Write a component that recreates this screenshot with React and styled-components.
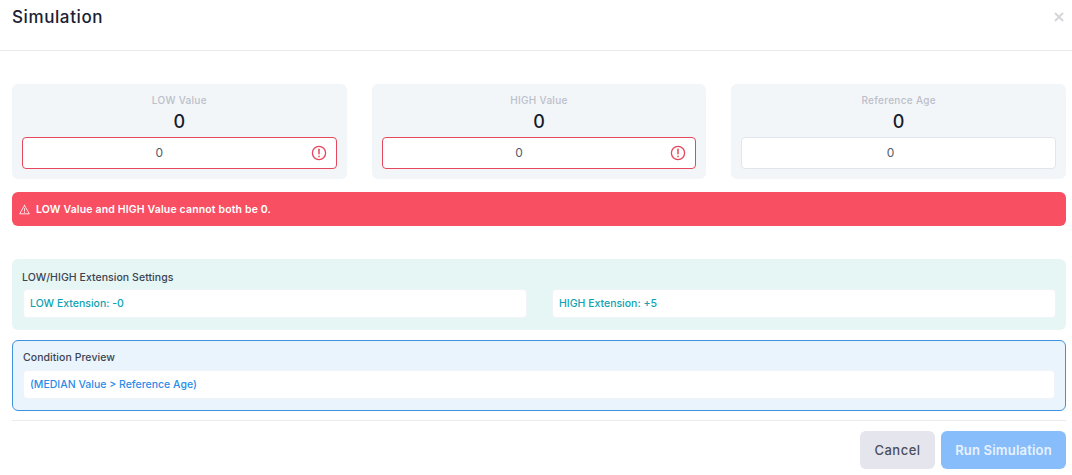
import React from 'react'
import styled, { createGlobalStyle } from 'styled-components'

const GlobalStyle = createGlobalStyle`
  html, body { margin: 0; padding: 0; background: #fff; }
  body { font-family: Inter, "Open Sans", sans-serif; color: #161c2d; }
  * { box-sizing: border-box; }
`

const App = () => {
  return (
    <>
      <GlobalStyle />
      <Modal>
        <Header>
          <Title>Simulation</Title>
          <Close aria-label="Close">
            <svg width="10" height="10" viewBox="0 0 10 10" fill="none" stroke="#d5d6da" strokeWidth="2">
              <path d="M1 1l8 8M9 1l-8 8" />
            </svg>
          </Close>
        </Header>
        <Body>
          <Cards>
            <ValueCard label="LOW Value" invalid />
            <ValueCard label="HIGH Value" invalid />
            <ValueCard label="Reference Age" />
          </Cards>
          <Alert>
            <svg width="11" height="11" viewBox="0 0 24 24" fill="none" stroke="#fff" strokeWidth="1.8" strokeLinejoin="round" strokeLinecap="round">
              <path d="M12 3L1.5 21.5h21L12 3z" />
              <path d="M12 10v5.5M12 18.2v.3" />
            </svg>
            LOW Value and HIGH Value cannot both be 0.
          </Alert>
          <ExtensionPanel>
            <PanelTitle>LOW/HIGH Extension Settings</PanelTitle>
            <ExtensionRow>
              <Readout $color="#0fa3b1">LOW Extension: -0</Readout>
              <Readout $color="#0fa3b1">HIGH Extension: +5</Readout>
            </ExtensionRow>
          </ExtensionPanel>
          <PreviewPanel>
            <PanelTitle>Condition Preview</PanelTitle>
            <Readout $color="#2b8be8">(MEDIAN Value &gt; Reference Age)</Readout>
          </PreviewPanel>
        </Body>
        <Footer>
          <CancelButton>Cancel</CancelButton>
          <RunButton>Run Simulation</RunButton>
        </Footer>
      </Modal>
    </>
  )
}

const ValueCard = ({ label, invalid }) => (
  <Card>
    <CardLabel>{label}</CardLabel>
    <CardValue>0</CardValue>
    <InputWrap>
      <ValueInput readOnly value="0" $invalid={invalid} />
      {invalid && (
        <InvalidIcon width="16" height="16" viewBox="0 0 16 16" fill="none" stroke="#e5485d" strokeWidth="1.3">
          <circle cx="8" cy="8" r="6.6" />
          <path d="M8 4.2v4.6" strokeWidth="1.5" strokeLinecap="round" />
          <path d="M8 11.2v.4" strokeWidth="1.6" strokeLinecap="round" />
        </InvalidIcon>
      )}
    </InputWrap>
  </Card>
)

export default App

const Modal = styled.div`
  width: 1072px;
  height: 475px;
  overflow: hidden;
  background: #fff;
`

const Header = styled.header`
  height: 51px;
  padding: 0 8px 17px 12px;
  display: flex;
  align-items: center;
  justify-content: space-between;
  border-bottom: 1px solid #e9ebec;
`

const Title = styled.h5`
  margin: 0;
  font-size: 17px;
  font-weight: 500;
  letter-spacing: 0.6px;
  color: #1a2035;
`

const Close = styled.button`
  border: 0;
  padding: 0;
  background: none;
  display: flex;
`

const Body = styled.div`
  padding: 33px 6px 0 12px;
`

const Cards = styled.div`
  display: grid;
  grid-template-columns: repeat(3, 1fr);
  column-gap: 25px;
`

const Card = styled.div`
  height: 95px;
  padding: 9px 10px 0;
  background: #f2f6f9;
  border-radius: 6px;
  text-align: center;
`

const CardLabel = styled.div`
  font-size: 10px;
  line-height: 14px;
  font-weight: 500;
  letter-spacing: 0.3px;
  color: #bcbfc9;
`

const CardValue = styled.div`
  margin: 2px 0;
  font-size: 18px;
  line-height: 26px;
  font-weight: 500;
  color: #161c2d;
`

const InputWrap = styled.div`
  position: relative;
  height: 32px;
`

const ValueInput = styled.input`
  width: 100%;
  height: 100%;
  padding: 0 ${({ $invalid }) => ($invalid ? '52px' : '28px')} 2px 12px;
  text-align: center;
  font-family: inherit;
  font-size: 12px;
  color: #555b66;
  background: #fff;
  outline: none;
  border-radius: 4px;
  border: 1px solid ${({ $invalid }) => ($invalid ? '#e5485d' : '#e3e5ec')};
`

const InvalidIcon = styled.svg`
  position: absolute;
  top: 8px;
  right: 10px;
`

const Alert = styled.div`
  height: 34px;
  margin-top: 13px;
  padding-left: 7px;
  display: flex;
  align-items: center;
  gap: 6px;
  border-radius: 6px;
  background: #f84f62;
  color: #fff;
  font-size: 10.5px;
  font-weight: 600;
  letter-spacing: 0.15px;
`

const PanelTitle = styled.div`
  font-size: 10.5px;
  line-height: 14px;
  font-weight: 500;
  letter-spacing: 0.05px;
  color: #3d4450;
  margin-bottom: 4px;
`

const ExtensionPanel = styled.section`
  height: 71px;
  margin-top: 33px;
  padding: 12px 10px 0;
  background: #e6f6f5;
  border-radius: 6px;
`

const PreviewPanel = styled.section`
  height: 71px;
  margin-top: 10px;
  padding: 10px 10px 0;
  background: #e9f4fd;
  border: 1px solid #3f92e0;
  border-radius: 6px;

  ${PanelTitle} {
    margin-bottom: 5px;
  }
`

const ExtensionRow = styled.div`
  display: grid;
  grid-template-columns: 504px 504px;
  column-gap: 25px;
  margin-left: 1px;
`

const Readout = styled.div`
  height: 29px;
  padding-left: 6px;
  display: flex;
  align-items: center;
  background: #fff;
  border: 1px solid #f0f4f9;
  border-radius: 4px;
  font-size: 10.5px;
  font-weight: 500;
  color: ${({ $color }) => $color};
`

const Footer = styled.footer`
  margin: 9px 6px 0 12px;
  padding-top: 10px;
  border-top: 1px solid #e9ebec;
  display: flex;
  justify-content: flex-end;
  gap: 6px;
`

const CancelButton = styled.button`
  width: 75px;
  height: 38px;
  border: 0;
  border-radius: 6px;
  background: #e4e5ed;
  color: #4a4f5a;
  font-family: inherit;
  font-size: 13px;
  font-weight: 500;
  letter-spacing: 0.5px;
`

const RunButton = styled.button`
  width: 125px;
  height: 38px;
  border: 0;
  border-radius: 6px;
  background: #87bdfb;
  color: #e8f2ff;
  font-family: inherit;
  font-size: 13px;
  font-weight: 600;
  letter-spacing: 0.2px;
`
